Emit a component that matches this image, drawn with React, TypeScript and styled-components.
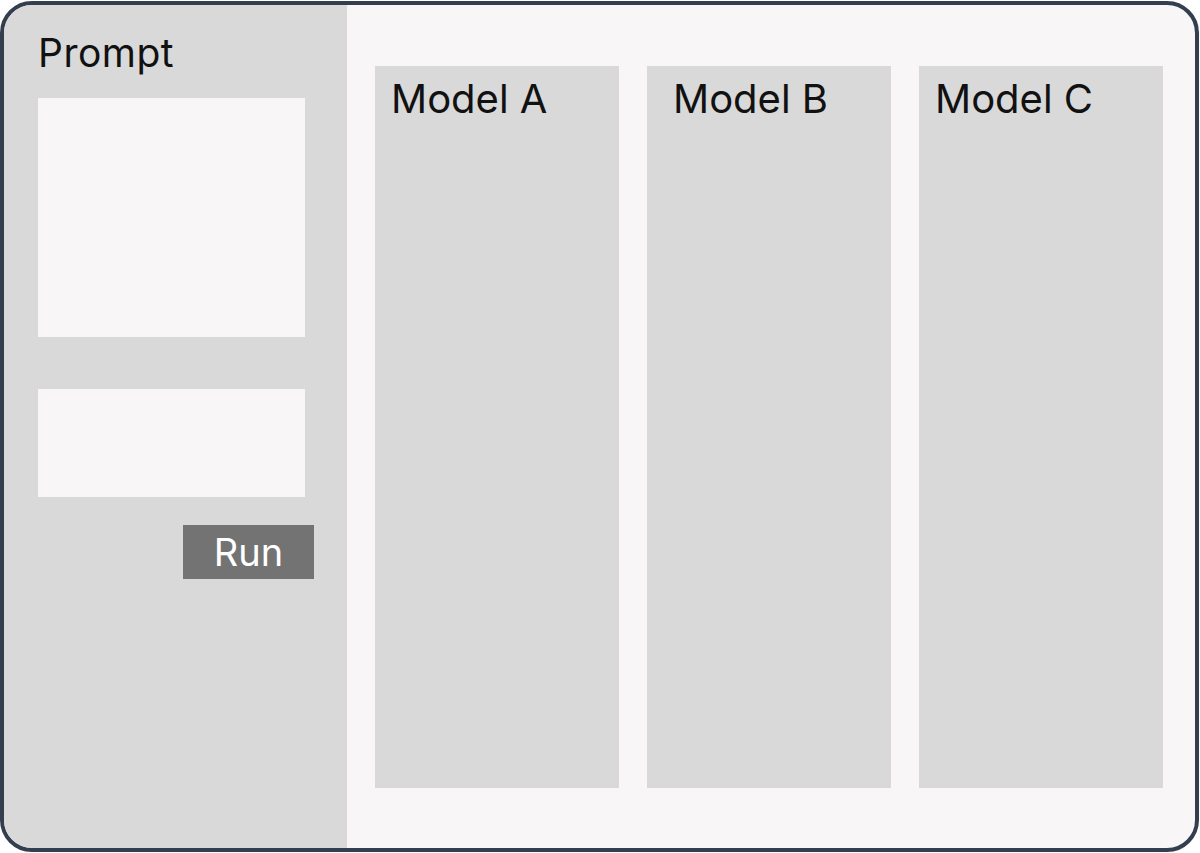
import React from "react";
import styled, { createGlobalStyle } from "styled-components";

const Global = createGlobalStyle`
  html, body { margin: 0; padding: 0; background: #ffffff; }
  body { font-family: Inter, "Noto Sans", sans-serif; }
`;

const Frame = styled.div`
  margin: 1px 1px 0 0;
  width: 1199px;
  height: 851px;
  box-sizing: border-box;
  border: 4px solid #333f4f;
  border-radius: 32px;
  overflow: hidden;
  display: flex;
  background: #f8f6f7;
`;

const Sidebar = styled.aside`
  width: 343px;
  flex: none;
  background: #d9d9d9;
  box-sizing: border-box;
  padding: 24px 0 0 34px;
  display: flex;
  flex-direction: column;
`;

const Label = styled.div`
  font-size: 39px;
  line-height: 47px;
  letter-spacing: 0.5px;
  color: #111111;
`;

const Box = styled.div<{ $h: number; $mt: number }>`
  width: 267px;
  height: ${(p) => p.$h}px;
  margin-top: ${(p) => p.$mt}px;
  background: #f8f6f7;
`;

const RunButton = styled.button`
  margin: 28px 0 0 145px;
  width: 131px;
  height: 54px;
  border: none;
  padding: 0;
  background: #737373;
  color: #ffffff;
  font-family: Inter, "Noto Sans", sans-serif;
  font-size: 38px;
  line-height: 54px;
`;

const Main = styled.main`
  flex: 1;
  box-sizing: border-box;
  padding: 61px 32px 60px 28px;
  display: grid;
  grid-template-columns: repeat(3, 1fr);
  gap: 28px;
`;

const Column = styled.section<{ $pl: number }>`
  background: #d9d9d9;
  padding: 9px 0 0 ${(p) => p.$pl}px;
`;

const ColTitle = styled.div`
  font-size: 40px;
  line-height: 48px;
  color: #111111;
`;

const models = [
  { name: "Model A", pl: 16 },
  { name: "Model B", pl: 26 },
  { name: "Model C", pl: 16 },
];

export default function App() {
  return (
    <>
      <Global />
      <Frame>
        <Sidebar>
          <Label>Prompt</Label>
          <Box $h={239} $mt={22} />
          <Box $h={108} $mt={52} />
          <RunButton>Run</RunButton>
        </Sidebar>
        <Main>
          {models.map((m) => (
            <Column key={m.name} $pl={m.pl}>
              <ColTitle>{m.name}</ColTitle>
            </Column>
          ))}
        </Main>
      </Frame>
    </>
  );
}
